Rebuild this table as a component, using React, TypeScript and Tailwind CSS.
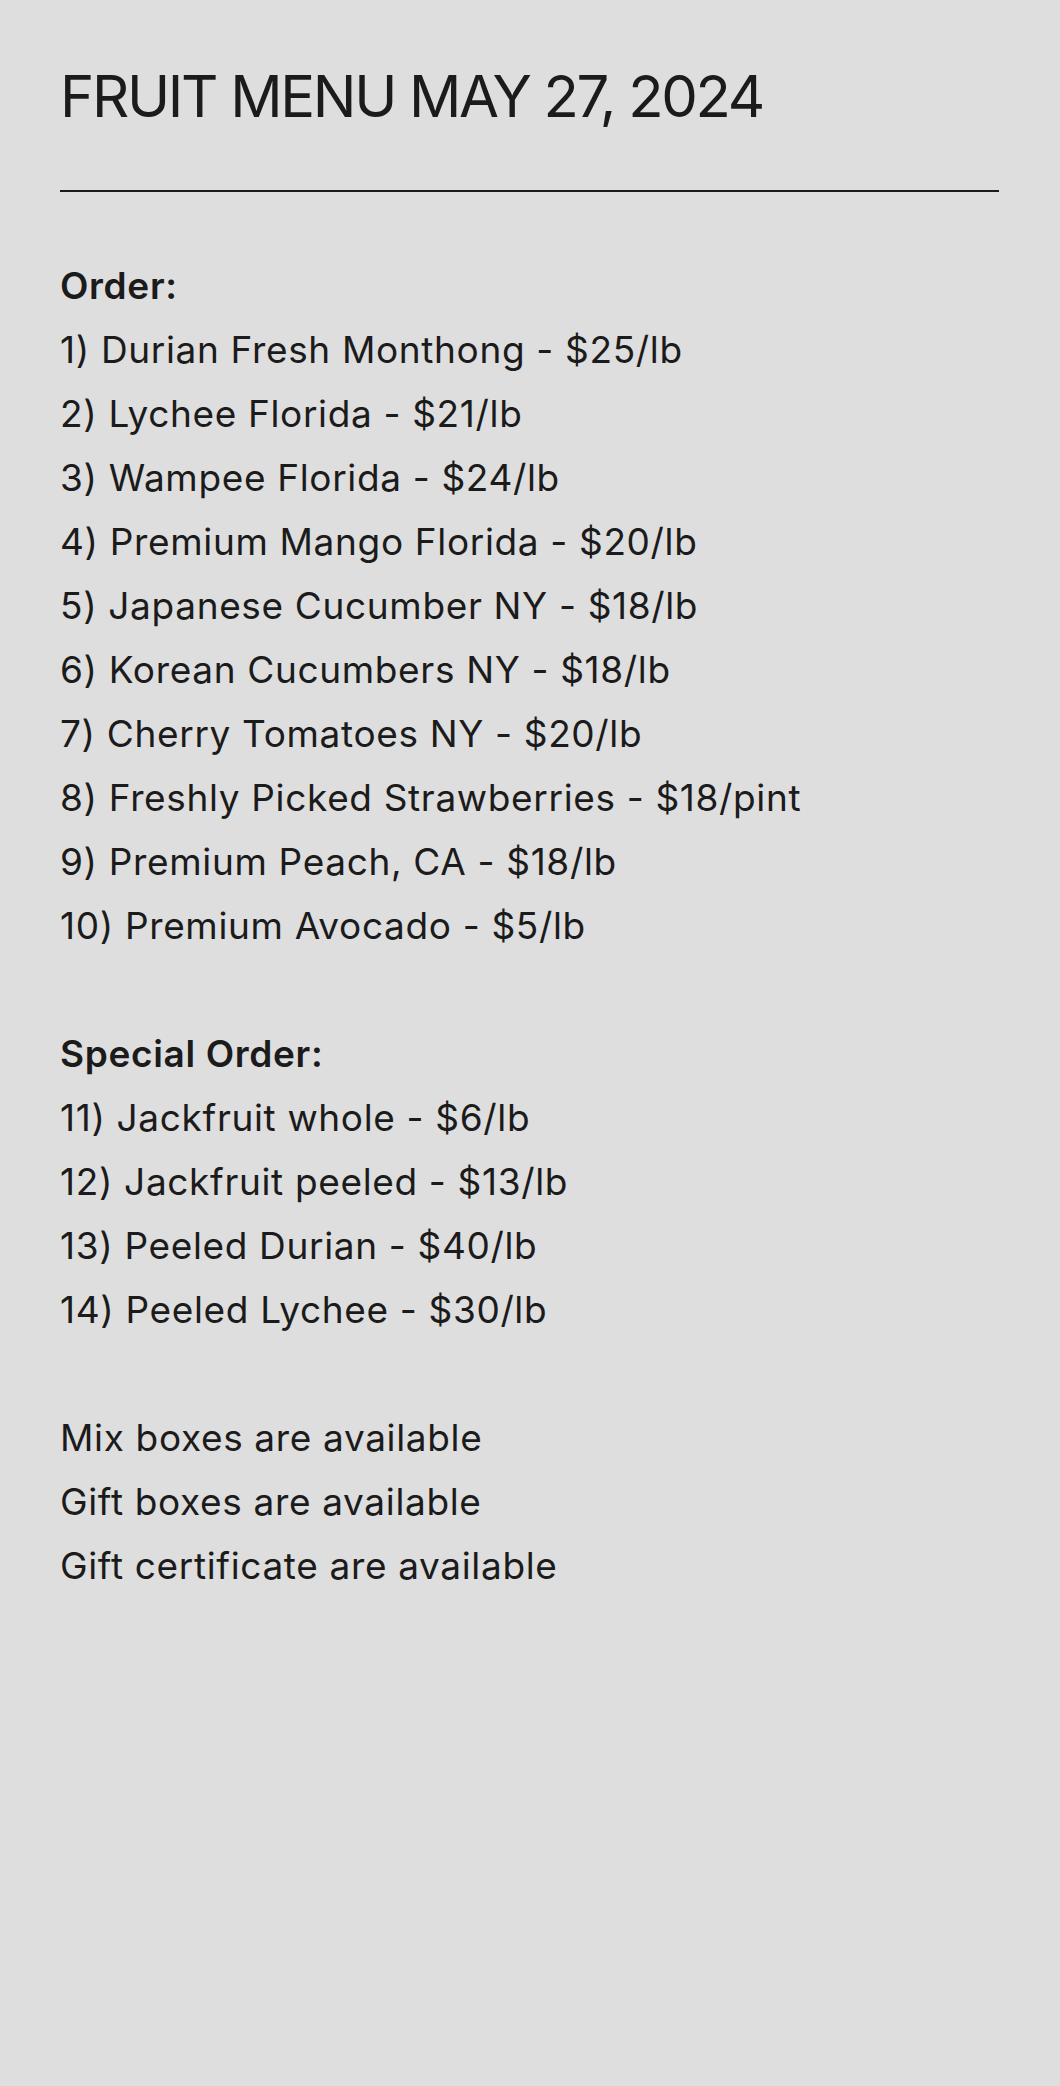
import React from "react";

const orders = [
  "1) Durian Fresh Monthong - $25/lb",
  "2) Lychee Florida - $21/lb",
  "3) Wampee Florida - $24/lb",
  "4) Premium Mango Florida - $20/lb",
  "5) Japanese Cucumber NY - $18/lb",
  "6) Korean Cucumbers NY - $18/lb",
  "7) Cherry Tomatoes NY - $20/lb",
  "8) Freshly Picked Strawberries - $18/pint",
  "9) Premium Peach, CA - $18/lb",
  "10) Premium Avocado - $5/lb",
];

const specials = [
  "11) Jackfruit whole - $6/lb",
  "12) Jackfruit peeled - $13/lb",
  "13) Peeled Durian - $40/lb",
  "14) Peeled Lychee - $30/lb",
];

const extras = [
  "Mix boxes are available",
  "Gift boxes are available",
  "Gift certificate are available",
];

export default function App() {
  return (
    <div
      className="min-h-[2086px] w-full bg-[#dedede] text-[#1b1b1b] px-[60px] pt-[56px]"
      style={{ fontFamily: "Inter, 'Noto Sans', sans-serif" }}
    >
      <h1 className="text-[58px] leading-[80px] font-normal tracking-[-0.04em]">
        FRUIT MENU MAY 27, 2024
      </h1>
      <hr className="mt-[54px] border-0 h-[2px] bg-[#1b1b1b] w-[939px]" />

      {/* menu lines */}
      <div className="mt-[62px] text-[37px] leading-[64px] tracking-[0.65px]">
        <p className="font-semibold">Order:</p>
        {orders.map((o) => (
          <p key={o}>{o}</p>
        ))}
        <div className="h-[64px]" />
        <p className="font-semibold">Special Order:</p>
        {specials.map((o) => (
          <p key={o}>{o}</p>
        ))}
        <div className="h-[64px]" />
        {extras.map((o) => (
          <p key={o}>{o}</p>
        ))}
      </div>
    </div>
  );
}
